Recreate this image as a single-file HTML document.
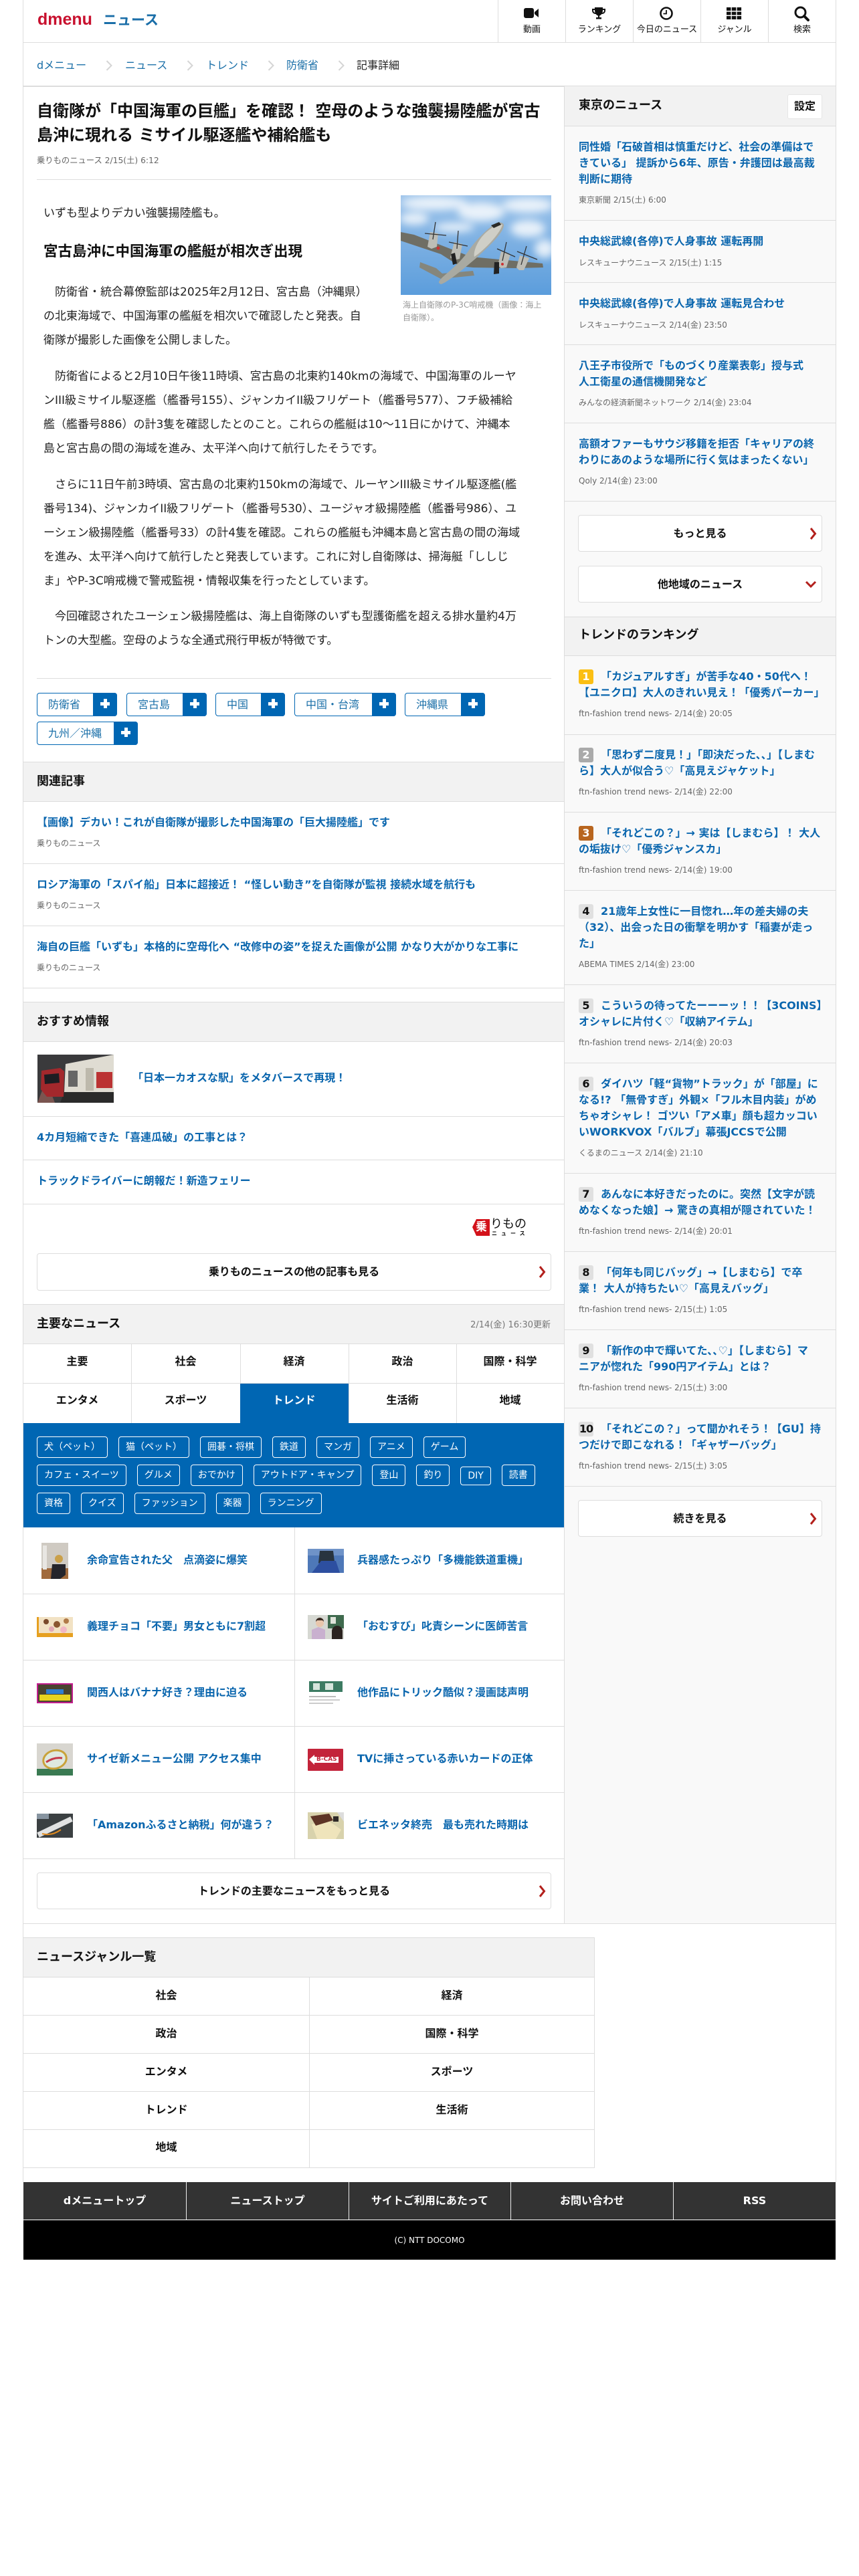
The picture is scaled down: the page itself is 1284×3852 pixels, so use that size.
<!DOCTYPE html>
<html lang="ja"><head><meta charset="utf-8"><title>dmenu ニュース</title>
<style>
html,body{margin:0;padding:0;background:#fff}
body{width:1284px;height:3852px;position:relative;overflow:hidden;font-family:"DejaVu Sans","Noto Sans CJK JP",sans-serif;color:#111;font-size:16px}
.a{position:absolute;white-space:nowrap}
.h,.v{position:absolute;background:#ddd}
.h{height:1px}.v{width:1px}
.hd{position:absolute;background:#f2f2f2;border-top:1px solid #ddd;border-bottom:1px solid #ddd;box-sizing:border-box}
.hd b,.st{font-size:18px;font-weight:700}
.t{font-size:16px;font-weight:700;line-height:24px;color:#0a66ae}
.m{font-size:12px;line-height:18px;color:#666}
.btn{position:absolute;background:#fff;border:1px solid #ddd;border-radius:4px;box-sizing:border-box;text-align:center;font-weight:700;font-size:16px;line-height:53px}
.btn svg{position:absolute;top:17px;right:7px}
.n{position:absolute;top:0;width:100px;height:63px;text-align:center;font-size:13px;line-height:18px}
.n svg{position:absolute;left:37px;top:8px}
.n span{position:absolute;left:0;right:0;top:36px}
.bc{font-size:16px;line-height:24px;color:#1a6fa8}
.art{font-size:17px;line-height:36px;color:#222}
.tag{position:absolute;height:35px;border:1px solid #0066b3;border-radius:4px;box-sizing:border-box;background:#fff;color:#1a6fa8;font-size:16px;line-height:33px;padding-left:16px}
.tag i{position:absolute;right:-1px;top:-1px;bottom:-1px;width:36px;background:#0066b3;border-radius:0 4px 4px 0}
.tag i:before{content:"";position:absolute;left:11px;top:14px;width:14px;height:5px;background:#fff}
.tag i:after{content:"";position:absolute;left:16px;top:9px;width:5px;height:14px;background:#fff}
.tab{position:absolute;width:161px;text-align:center;font-weight:700;font-size:16px;line-height:24px}
.chips{position:absolute;left:55px;display:flex;gap:16px;align-items:flex-end}
.chip{height:32px;box-sizing:border-box;border:1px solid #fff;border-radius:4px;color:#fff;font-size:14px;line-height:30px;padding:0 10px;white-space:nowrap}
.bd{display:inline-block;width:22px;height:22px;border-radius:3px;text-align:center;font-size:16px;font-weight:700;line-height:22px;margin-right:11px;background:#e0e0e0;color:#111;vertical-align:top;margin-top:1px}
.g{position:absolute;text-align:center;font-weight:700;font-size:16px;line-height:24px}
.f{position:absolute;top:3279px;text-align:center;color:#fff;font-weight:700;font-size:16px;line-height:24px}
svg{display:block}
</style></head><body>

<!-- frame -->
<div class="v" style="left:34px;top:0;height:3263px"></div>
<div class="v" style="left:1249px;top:0;height:3263px"></div>
<div class="h" style="left:34px;top:63px;width:1216px"></div>
<div class="h" style="left:34px;top:128px;width:1216px;height:2px"></div>

<!-- logo -->
<div class="a" style="left:56px;top:11px;font:700 25px/36px 'Liberation Sans',sans-serif;color:#c8102e">dmenu</div>
<div class="a" style="left:154px;top:14px;font-size:21px;line-height:32px;font-weight:700;color:#1a6ea8">ニュース</div>

<!-- nav -->
<div class="v" style="left:744px;top:0;height:63px"></div>
<div class="v" style="left:845px;top:0;height:63px"></div>
<div class="v" style="left:946px;top:0;height:63px"></div>
<div class="v" style="left:1047px;top:0;height:63px"></div>
<div class="v" style="left:1148px;top:0;height:63px"></div>
<div class="n" style="left:745px"><svg width="24" height="24" viewBox="0 0 24 24"><path fill="#111" d="M1 7a3 3 0 0 1 3-3h9a3 3 0 0 1 3 3v9a3 3 0 0 1-3 3H4a3 3 0 0 1-3-3zM17 10l6-5v13l-6-5z"/></svg><span>動画</span></div>
<div class="n" style="left:846px"><svg width="24" height="24" viewBox="0 0 24 24"><path fill="#111" d="M6 3h12v2h4v3a5 5 0 0 1-5 5h-.6A6 6 0 0 1 13 15.6V18h3v2.5H8V18h3v-2.4A6 6 0 0 1 7.600 13H7a5 5 0 0 1-5-5V5h4zM4 7v1a3 3 0 0 0 2.600 3A14 14 0 0 1 6 7zm16 0h-2a14 14 0 0 1-.6 4A3 3 0 0 0 20 8z"/></svg><span>ランキング</span></div>
<div class="n" style="left:947px"><svg width="24" height="24" viewBox="0 0 24 24"><circle cx="12" cy="12" r="8.500" fill="none" stroke="#111" stroke-width="2.600"/><path d="M12 7v5.500H7.500" fill="none" stroke="#111" stroke-width="1.800"/></svg><span>今日のニュース</span></div>
<div class="n" style="left:1048px"><svg width="24" height="24" viewBox="0 0 24 24"><path fill="#111" d="M1 3h6.500v5H1zM8.800 3h6.500v5H8.800zM16.600 3h6.500v5h-6.500zM1 9.500h6.500v5H1zM8.800 9.500h6.500v5H8.800zM16.600 9.500h6.500v5h-6.500zM1 16h6.500v5H1zM8.800 16h6.500v5H8.800zM16.600 16h6.500v5h-6.500z"/></svg><span>ジャンル</span></div>
<div class="n" style="left:1149px"><svg width="24" height="24" viewBox="0 0 24 24"><circle cx="10.500" cy="10.500" r="7.500" fill="none" stroke="#111" stroke-width="3"/><path d="M16 16l6 6" stroke="#111" stroke-width="4" stroke-linecap="round"/></svg><span>検索</span></div>

<!-- breadcrumb -->
<div class="a bc" style="left:55px;top:86px">dメニュー</div>
<div class="a bc" style="left:187px;top:86px">ニュース</div>
<div class="a bc" style="left:308px;top:86px">トレンド</div>
<div class="a bc" style="left:428px;top:86px">防衛省</div>
<div class="a bc" style="left:533px;top:86px;color:#222">記事詳細</div>
<svg class="a" style="left:158px;top:90px" width="11" height="16"><path d="M1.500 1l7 7-7 7" fill="none" stroke="#d5d5d5" stroke-width="2"/></svg>
<svg class="a" style="left:279px;top:90px" width="11" height="16"><path d="M1.500 1l7 7-7 7" fill="none" stroke="#d5d5d5" stroke-width="2"/></svg>
<svg class="a" style="left:400px;top:90px" width="11" height="16"><path d="M1.500 1l7 7-7 7" fill="none" stroke="#d5d5d5" stroke-width="2"/></svg>
<svg class="a" style="left:505px;top:90px" width="11" height="16"><path d="M1.500 1l7 7-7 7" fill="none" stroke="#d5d5d5" stroke-width="2"/></svg>

<!-- article -->
<div class="a" style="left:55px;top:148px;font-size:24px;line-height:36px;font-weight:700">自衛隊が「中国海軍の巨艦」を確認！ 空母のような強襲揚陸艦が宮古<br>島沖に現れる ミサイル駆逐艦や補給艦も</div>
<div class="a m" style="left:55px;top:231px;font-size:12.300px">乗りものニュース 2/15(土) 6:12</div>
<div class="h" style="left:55px;top:268px;width:769px"></div>

<svg class="a" style="left:599px;top:292px" width="225" height="149" viewBox="0 0 225 149">
<defs><linearGradient id="sky" x1="0" y1="0" x2="0" y2="1"><stop offset="0" stop-color="#9cc3ea"/><stop offset=".5" stop-color="#7bafe2"/><stop offset="1" stop-color="#5b9ddc"/></linearGradient><filter id="bl"><feGaussianBlur stdDeviation="6"/></filter></defs>
<rect width="225" height="149" fill="url(#sky)"/>
<g fill="#fff" opacity=".8" filter="url(#bl)"><ellipse cx="50" cy="12" rx="50" ry="10"/><ellipse cx="120" cy="25" rx="35" ry="14"/><ellipse cx="190" cy="15" rx="38" ry="11"/><ellipse cx="20" cy="35" rx="22" ry="9"/><ellipse cx="190" cy="50" rx="26" ry="13"/><ellipse cx="80" cy="48" rx="30" ry="7"/><ellipse cx="215" cy="80" rx="15" ry="14"/></g>
<path fill="#6f6e64" d="M0 55L20 59 105 92 212 102 213 108 172 109 108 108 88 106 60 88 0 68z"/>
<path fill="#85867c" d="M29 100L53 109 62 117 108 113 110 120 60 125 28 108z"/>
<path fill="#a9aaa2" d="M60 125C56 130 56 131 60 133 66 132 85 118 115 92 130 78 152 58 154 46 155 40 146 39 139 44 125 54 110 70 100 85 85 105 70 115 60 125z"/>
<path fill="#cfcfc7" d="M125 58C135 48 146 42 152 44 150 54 130 78 110 92 108 84 115 68 125 58z"/>
<path fill="#2b2b28" d="M135 45l12-5 3 4-11 5z"/>
<g fill="#bdbdb6"><path d="M44 55l12 2-2 20-8 3-6-3z"/><path d="M80 70l12 3-4 22-8 2-6-4z"/><path d="M150 84l14 4-6 20-8 1-5-4z"/><path d="M178 90l14 4-8 18-7 0-4-4z"/></g>
<g stroke="#333" stroke-width="1.300"><path d="M52 40L48 66M36 57L68 60"/><path d="M86 53L84 80M72 70L100 76"/><path d="M158 70L152 98M144 80L171 92"/><path d="M188 76L180 104M174 84L204 96"/></g>
<path fill="#222" d="M75 88l6-2 3 16-6 2zM140 100l7 0 0 17-8 1z"/>
<circle cx="56" cy="79" r="2.500" fill="#c33"/><circle cx="152" cy="103" r="2" fill="#c33"/>
</svg>
<div class="a" style="left:602px;top:447px;font-size:12px;line-height:19px;color:#999">海上自衛隊のP-3C哨戒機（画像：海上<br>自衛隊）。</div>

<div class="a art" style="left:65px;top:301px">いずも型よりデカい強襲揚陸艦も。</div>
<div class="a" style="left:65px;top:361px;font-size:21.500px;line-height:32px;font-weight:700">宮古島沖に中国海軍の艦艇が相次ぎ出現</div>
<div class="a art" style="left:65px;top:419px">　防衛省・統合幕僚監部は2025年2月12日、宮古島（沖縄県）<br>の北東海域で、中国海軍の艦艇を相次いで確認したと発表。自<br>衛隊が撮影した画像を公開しました。</div>
<div class="a art" style="left:65px;top:545px">　防衛省によると2月10日午後11時頃、宮古島の北東約140kmの海域で、中国海軍のルーヤ<br>ンIII級ミサイル駆逐艦（艦番号155）、ジャンカイII級フリゲート（艦番号577）、フチ級補給<br>艦（艦番号886）の計3隻を確認したとのこと。これらの艦艇は10～11日にかけて、沖縄本<br>島と宮古島の間の海域を進み、太平洋へ向けて航行したそうです。</div>
<div class="a art" style="left:65px;top:707px">　さらに11日午前3時頃、宮古島の北東約150kmの海域で、ルーヤンIII級ミサイル駆逐艦(艦<br>番号134)、ジャンカイII級フリゲート（艦番号530）、ユージャオ級揚陸艦（艦番号986）、ユ<br>ーシェン級揚陸艦（艦番号33）の計4隻を確認。これらの艦艇も沖縄本島と宮古島の間の海域<br>を進み、太平洋へ向けて航行したと発表しています。これに対し自衛隊は、掃海艇「ししじ<br>ま」やP-3C哨戒機で警戒監視・情報収集を行ったとしています。</div>
<div class="a art" style="left:65px;top:904px">　今回確認されたユーシェン級揚陸艦は、海上自衛隊のいずも型護衛艦を超える排水量約4万<br>トンの大型艦。空母のような全通式飛行甲板が特徴です。</div>
<div class="h" style="left:55px;top:1014px;width:769px"></div>

<!-- tags -->
<div class="tag" style="left:55px;top:1036px;width:120px">防衛省<i></i></div>
<div class="tag" style="left:189px;top:1036px;width:120px">宮古島<i></i></div>
<div class="tag" style="left:322px;top:1036px;width:104px">中国<i></i></div>
<div class="tag" style="left:440px;top:1036px;width:152px">中国・台湾<i></i></div>
<div class="tag" style="left:605px;top:1036px;width:120px">沖縄県<i></i></div>
<div class="tag" style="left:55px;top:1079px;width:151px">九州／沖縄<i></i></div>

<!-- related -->
<div class="hd" style="left:35px;top:1139px;width:808px;height:60px"><b class="a" style="left:20px;top:15px;line-height:27px">関連記事</b></div>
<div class="a t" style="left:55px;top:1218px">【画像】デカい！これが自衛隊が撮影した中国海軍の「巨大揚陸艦」です</div>
<div class="a m" style="left:55px;top:1252px">乗りものニュース</div>
<div class="h" style="left:35px;top:1291px;width:808px"></div>
<div class="a t" style="left:55px;top:1311px">ロシア海軍の「スパイ船」日本に超接近！ “怪しい動き”を自衛隊が監視 接続水域を航行も</div>
<div class="a m" style="left:55px;top:1345px">乗りものニュース</div>
<div class="h" style="left:35px;top:1384px;width:808px"></div>
<div class="a t" style="left:55px;top:1404px">海自の巨艦「いずも」本格的に空母化へ “改修中の姿”を捉えた画像が公開 かなり大がかりな工事に</div>
<div class="a m" style="left:55px;top:1438px">乗りものニュース</div>
<div class="h" style="left:35px;top:1477px;width:808px"></div>

<!-- recommend -->
<div class="hd" style="left:35px;top:1498px;width:808px;height:60px"><b class="a" style="left:20px;top:15px;line-height:27px">おすすめ情報</b></div>
<svg class="a" style="left:56px;top:1577px" width="114" height="72" viewBox="0 0 114 72"><rect width="114" height="72" fill="#3a3a3c"/><path fill="#dfdcd2" d="M42 14L114 0v56H40z"/><path fill="#bdb9ac" d="M72 20h12v34H72z"/><path fill="#2a2a2a" d="M40 56h74v16H34z"/><path fill="#7a5550" d="M0 72L10 46h6L26 72z"/><path fill="#a3282c" d="M6 24l28-4 6 5-1 38H14L5 52z"/><path fill="#1d1d22" d="M10 30l22-2 1 14-22 2z"/><path fill="#b33" d="M88 26h24v24H88z"/><path fill="#666" d="M46 24h14v24H46z"/></svg>
<div class="a t" style="left:198px;top:1600px">「日本一カオスな駅」をメタバースで再現！</div>
<div class="h" style="left:35px;top:1669px;width:808px"></div>
<div class="a t" style="left:55px;top:1689px">4カ月短縮できた「喜連瓜破」の工事とは？</div>
<div class="h" style="left:35px;top:1734px;width:808px"></div>
<div class="a t" style="left:55px;top:1754px">トラックドライバーに朗報だ！新造フェリー</div>
<div class="h" style="left:35px;top:1800px;width:808px"></div>
<svg class="a" style="left:706px;top:1822px" width="28" height="27"><path fill="#d3121a" d="M6 1h20v25H6L0 13z"/></svg>
<div class="a" style="left:711px;top:1823px;font-size:17px;line-height:24px;color:#fff;font-weight:700">乗</div>
<div class="a" style="left:733px;top:1820px;font-size:18px;line-height:22px;color:#111">りもの</div>
<div class="a" style="left:735px;top:1840px;font-size:8px;line-height:10px;color:#111;font-weight:700;letter-spacing:6px">ニュース</div>
<div class="btn" style="left:55px;top:1874px;width:769px;height:56px">乗りものニュースの他の記事も見る<svg width="11" height="20"><path d="M2 2l6.500 8L2 18" fill="none" stroke="#b3201c" stroke-width="3"/></svg></div>

<!-- main news -->
<div class="hd" style="left:35px;top:1950px;width:808px;height:60px"><b class="a" style="left:20px;top:15px;line-height:27px">主要なニュース</b><span class="a" style="right:20px;top:21px;font-size:13px;line-height:20px;color:#777">2/14(金) 16:30更新</span></div>
<div class="tab" style="left:35px;top:2024px">主要</div>
<div class="tab" style="left:197px;top:2024px">社会</div>
<div class="tab" style="left:359px;top:2024px">経済</div>
<div class="tab" style="left:521px;top:2024px">政治</div>
<div class="tab" style="left:682px;top:2024px">国際・科学</div>
<div class="tab" style="left:35px;top:2082px">エンタメ</div>
<div class="tab" style="left:197px;top:2082px">スポーツ</div>
<div class="a" style="left:359px;top:2068px;width:162px;height:60px;background:#0066b3"></div>
<div class="tab" style="left:359px;top:2082px;color:#fff">トレンド</div>
<div class="tab" style="left:521px;top:2082px">生活術</div>
<div class="tab" style="left:682px;top:2082px">地域</div>
<div class="h" style="left:35px;top:2068px;width:808px"></div>
<div class="v" style="left:196px;top:2010px;height:118px"></div>
<div class="v" style="left:359px;top:2010px;height:58px"></div>
<div class="v" style="left:521px;top:2010px;height:118px"></div>
<div class="v" style="left:682px;top:2010px;height:118px"></div>
<div class="a" style="left:35px;top:2128px;width:808px;height:156px;background:#0066b3"></div>
<div class="chips" style="top:2148px"><span class="chip">犬（ペット）</span><span class="chip">猫（ペット）</span><span class="chip">囲碁・将棋</span><span class="chip">鉄道</span><span class="chip">マンガ</span><span class="chip">アニメ</span><span class="chip">ゲーム</span></div>
<div class="chips" style="top:2190px"><span class="chip">カフェ・スイーツ</span><span class="chip">グルメ</span><span class="chip">おでかけ</span><span class="chip">アウトドア・キャンプ</span><span class="chip">登山</span><span class="chip">釣り</span><span class="chip" style="height:28px;line-height:26px;margin-bottom:1px">DIY</span><span class="chip">読書</span></div>
<div class="chips" style="top:2232px"><span class="chip">資格</span><span class="chip">クイズ</span><span class="chip">ファッション</span><span class="chip">楽器</span><span class="chip">ランニング</span></div>

<!-- grid -->
<div class="v" style="left:440px;top:2284px;height:495px"></div>
<div class="h" style="left:35px;top:2383px;width:808px"></div>
<div class="h" style="left:35px;top:2482px;width:808px"></div>
<div class="h" style="left:35px;top:2581px;width:808px"></div>
<div class="h" style="left:35px;top:2680px;width:808px"></div>
<div class="h" style="left:35px;top:2779px;width:808px"></div>

<svg class="a" style="left:62px;top:2307px" width="40" height="54" viewBox="0 0 40 54"><rect width="40" height="54" fill="#cfcac2"/><rect y="38" width="40" height="16" fill="#a06a3c"/><rect x="2" y="4" width="6" height="36" fill="#e8e6e2"/><circle cx="26" cy="24" r="6" fill="#caa04a"/><path fill="#25252b" d="M16 32h20v16l-8 6H14z"/></svg>
<div class="a t" style="left:130px;top:2321px">余命宣告された父　点滴姿に爆笑</div>
<svg class="a" style="left:460px;top:2316px" width="54" height="36" viewBox="0 0 54 36"><rect width="54" height="36" fill="#4e78b8"/><rect width="54" height="10" fill="#6f93c8"/><path fill="#28343f" d="M18 3h20l2 16-5 10H24l-8-8z"/><path fill="#2d4fa0" d="M20 18h22l6 18H6z"/></svg>
<div class="a t" style="left:534px;top:2321px">兵器感たっぷり「多機能鉄道重機」</div>

<svg class="a" style="left:55px;top:2418px" width="54" height="30" viewBox="0 0 54 30"><rect width="54" height="30" fill="#f2e2c4"/><circle cx="14" cy="7" r="4" fill="#7a4a2a"/><circle cx="30" cy="11" r="5" fill="#8a5630"/><circle cx="44" cy="6" r="4" fill="#b07a48"/><circle cx="22" cy="18" r="4" fill="#e3a9b5"/><circle cx="40" cy="19" r="5" fill="#f1b7c4"/><rect y="24" width="54" height="6" fill="#e6a020"/><rect width="3" height="30" fill="#e6a020"/></svg>
<div class="a t" style="left:130px;top:2420px">義理チョコ「不要」男女ともに7割超</div>
<svg class="a" style="left:460px;top:2415px" width="54" height="36" viewBox="0 0 54 36"><rect width="54" height="36" fill="#d6d8d2"/><rect x="30" width="24" height="20" fill="#3f6a4e"/><rect x="34" y="3" width="8" height="10" fill="#dfe3da"/><path fill="#c9b0cf" d="M6 36V22l10-4 10 4v14z"/><circle cx="18" cy="12" r="6" fill="#e8c6ac"/><path fill="#3a2a22" d="M12 10a6 6 0 0 1 12 0l-2-2h-8z"/><path fill="#2b2320" d="M36 36V24a8 8 0 0 1 16 0v12z"/></svg>
<div class="a t" style="left:534px;top:2420px">「おむすび」叱責シーンに医師苦言</div>

<svg class="a" style="left:55px;top:2517px" width="54" height="30" viewBox="0 0 54 30"><rect width="54" height="30" fill="#c21d8d"/><rect x="2" y="2" width="50" height="26" fill="#4a4330"/><rect x="14" y="9" width="26" height="7" fill="#2f7ed0"/><rect x="4" y="17" width="46" height="9" fill="#e7d31f"/></svg>
<div class="a t" style="left:130px;top:2519px">関西人はバナナ好き？理由に迫る</div>
<svg class="a" style="left:460px;top:2510px" width="54" height="45" viewBox="0 0 54 45"><rect width="54" height="45" fill="#fff"/><rect x="2" y="4" width="50" height="16" fill="#3c7b62"/><rect x="8" y="7" width="10" height="10" fill="#d6e5dc"/><rect x="26" y="7" width="12" height="10" fill="#d6e5dc"/><rect x="2" y="26" width="40" height="2" fill="#bbb"/><rect x="2" y="31" width="46" height="2" fill="#ccc"/><rect x="2" y="36" width="36" height="2" fill="#ccc"/></svg>
<div class="a t" style="left:534px;top:2519px">他作品にトリック酷似？漫画誌声明</div>

<svg class="a" style="left:55px;top:2607px" width="54" height="48" viewBox="0 0 54 48"><rect width="54" height="48" fill="#d8d6d0"/><rect y="38" width="54" height="10" fill="#3a7a52"/><ellipse cx="27" cy="24" rx="19" ry="15" transform="rotate(-15 27 24)" fill="#c9a23a"/><ellipse cx="27" cy="24" rx="16" ry="12" transform="rotate(-15 27 24)" fill="#dfe9e0"/><path d="M14 28q12-8 24-6" stroke="#c43a4a" stroke-width="3" fill="none"/></svg>
<div class="a t" style="left:130px;top:2618px">サイゼ新メニュー公開 アクセス集中</div>
<svg class="a" style="left:460px;top:2615px" width="53" height="33" viewBox="0 0 53 33"><rect width="53" height="33" rx="1" fill="#c3243a"/><path fill="#fff" d="M2 16L10 9v3h36v9H10v3z"/></svg>
<div class="a" style="left:473px;top:2622px;font-size:9px;line-height:18px;color:#c3243a;font-weight:700">B-CAS</div>
<div class="a t" style="left:534px;top:2618px">TVに挿さっている赤いカードの正体</div>

<svg class="a" style="left:55px;top:2712px" width="54" height="36" viewBox="0 0 54 36"><rect width="54" height="36" fill="#3b4042"/><rect y="0" width="18" height="8" fill="#8794a0"/><path d="M2 32L52 8" stroke="#fff" stroke-width="8" opacity=".85"/><path d="M8 30q14 4 28-6" stroke="#e08a1e" stroke-width="2" fill="none"/></svg>
<div class="a t" style="left:130px;top:2717px">「Amazonふるさと納税」何が違う？</div>
<svg class="a" style="left:460px;top:2710px" width="54" height="40" viewBox="0 0 54 40"><rect width="54" height="40" fill="#d8d2ac"/><path fill="#efe4bb" d="M6 18L30 12 50 26 42 40H14z"/><path fill="#5d3426" d="M4 6L32 2 38 12 12 20z"/><path fill="#ddd" d="M44 0h10v14z"/><rect x="38" y="6" width="8" height="8" fill="#2f2a28"/></svg>
<div class="a t" style="left:534px;top:2717px">ビエネッタ終売　最も売れた時期は</div>

<div class="btn" style="left:55px;top:2800px;width:769px;height:55px">トレンドの主要なニュースをもっと見る<svg width="11" height="20"><path d="M2 2l6.500 8L2 18" fill="none" stroke="#b3201c" stroke-width="3"/></svg></div>

<!-- sidebar -->
<div class="a" style="left:843px;top:130px;width:406px;height:2746px;background:#f9f9f9"></div>
<div class="v" style="left:843px;top:130px;height:2746px"></div>
<div class="hd" style="left:844px;top:129px;width:405px;height:60px;border-top:0"></div>
<div class="a st" style="left:865px;top:144px;line-height:27px">東京のニュース</div>
<div class="a" style="left:1177px;top:141px;width:52px;height:37px;box-sizing:border-box;background:#fff;border:1px solid #e6e6e6;border-radius:3px;text-align:center;font-weight:700;font-size:16px;line-height:33px">設定</div>

<div class="a t" style="left:865px;top:208px">同性婚「石破首相は慎重だけど、社会の準備はで<br>きている」 提訴から6年、原告・弁護団は最高裁<br>判断に期待</div>
<div class="a m" style="left:865px;top:290px">東京新聞 2/15(土) 6:00</div>
<div class="h" style="left:844px;top:329px;width:405px"></div>
<div class="a t" style="left:865px;top:349px">中央総武線(各停)で人身事故 運転再開</div>
<div class="a m" style="left:865px;top:384px">レスキューナウニュース 2/15(土) 1:15</div>
<div class="h" style="left:844px;top:422px;width:405px"></div>
<div class="a t" style="left:865px;top:442px">中央総武線(各停)で人身事故 運転見合わせ</div>
<div class="a m" style="left:865px;top:477px">レスキューナウニュース 2/14(金) 23:50</div>
<div class="h" style="left:844px;top:515px;width:405px"></div>
<div class="a t" style="left:865px;top:535px">八王子市役所で「ものづくり産業表彰」授与式<br>人工衛星の通信機開発など</div>
<div class="a m" style="left:865px;top:593px">みんなの経済新聞ネットワーク 2/14(金) 23:04</div>
<div class="h" style="left:844px;top:632px;width:405px"></div>
<div class="a t" style="left:865px;top:652px">高額オファーもサウジ移籍を拒否「キャリアの終<br>わりにあのような場所に行く気はまったくない」</div>
<div class="a m" style="left:865px;top:710px">Qoly 2/14(金) 23:00</div>
<div class="h" style="left:844px;top:749px;width:405px"></div>
<div class="btn" style="left:864px;top:770px;width:365px;height:55px">もっと見る<svg width="11" height="20"><path d="M2 2l6.500 8L2 18" fill="none" stroke="#b3201c" stroke-width="3"/></svg></div>
<div class="btn" style="left:864px;top:846px;width:365px;height:55px">他地域のニュース<svg style="top:21px" width="18" height="12"><path d="M2 2l7 7 7-7" fill="none" stroke="#b3201c" stroke-width="3"/></svg></div>
<div class="hd" style="left:844px;top:922px;width:405px;height:59px"></div>
<div class="a st" style="left:865px;top:936px;line-height:27px">トレンドのランキング</div>

<div class="a t" style="left:865px;top:1000px"><span class="bd" style="background:#fbbf14;color:#fff">1</span>「カジュアルすぎ」が苦手な40・50代へ！<br>【ユニクロ】大人のきれい見え！「優秀パーカー」</div>
<div class="a m" style="left:865px;top:1058px">ftn-fashion trend news- 2/14(金) 20:05</div>
<div class="h" style="left:844px;top:1098px;width:405px"></div>
<div class="a t" style="left:865px;top:1117px"><span class="bd" style="background:#aaa;color:#fff">2</span>「思わず二度見！」「即決だった､､」【しまむ<br>ら】大人が似合う♡「高見えジャケット」</div>
<div class="a m" style="left:865px;top:1175px">ftn-fashion trend news- 2/14(金) 22:00</div>
<div class="h" style="left:844px;top:1214px;width:405px"></div>
<div class="a t" style="left:865px;top:1234px"><span class="bd" style="background:#b8651e;color:#fff">3</span>「それどこの？」→ 実は【しまむら】！ 大人<br>の垢抜け♡「優秀ジャンスカ」</div>
<div class="a m" style="left:865px;top:1292px">ftn-fashion trend news- 2/14(金) 19:00</div>
<div class="h" style="left:844px;top:1331px;width:405px"></div>
<div class="a t" style="left:865px;top:1351px"><span class="bd">4</span>21歳年上女性に一目惚れ…年の差夫婦の夫<br>（32）、出会った日の衝撃を明かす「稲妻が走っ<br>た」</div>
<div class="a m" style="left:865px;top:1433px">ABEMA TIMES 2/14(金) 23:00</div>
<div class="h" style="left:844px;top:1472px;width:405px"></div>
<div class="a t" style="left:865px;top:1492px"><span class="bd">5</span>こういうの待ってたーーーッ！！【3COINS】<br>オシャレに片付く♡「収納アイテム」</div>
<div class="a m" style="left:865px;top:1550px">ftn-fashion trend news- 2/14(金) 20:03</div>
<div class="h" style="left:844px;top:1589px;width:405px"></div>
<div class="a t" style="left:865px;top:1609px"><span class="bd">6</span>ダイハツ「軽“貨物”トラック」が「部屋」に<br>なる!? 「無骨すぎ」外観×「フル木目内装」がめ<br>ちゃオシャレ！ ゴツい「アメ車」顔も超カッコい<br>いWORKVOX「バルブ」幕張JCCSで公開</div>
<div class="a m" style="left:865px;top:1715px">くるまのニュース 2/14(金) 21:10</div>
<div class="h" style="left:844px;top:1754px;width:405px"></div>
<div class="a t" style="left:865px;top:1774px"><span class="bd">7</span>あんなに本好きだったのに。突然【文字が読<br>めなくなった娘】→ 驚きの真相が隠されていた！</div>
<div class="a m" style="left:865px;top:1832px">ftn-fashion trend news- 2/14(金) 20:01</div>
<div class="h" style="left:844px;top:1871px;width:405px"></div>
<div class="a t" style="left:865px;top:1891px"><span class="bd">8</span>「何年も同じバッグ」→【しまむら】で卒<br>業！ 大人が持ちたい♡「高見えバッグ」</div>
<div class="a m" style="left:865px;top:1949px">ftn-fashion trend news- 2/15(土) 1:05</div>
<div class="h" style="left:844px;top:1988px;width:405px"></div>
<div class="a t" style="left:865px;top:2008px"><span class="bd">9</span>「新作の中で輝いてた､､♡」【しまむら】マ<br>ニアが惚れた「990円アイテム」とは？</div>
<div class="a m" style="left:865px;top:2066px">ftn-fashion trend news- 2/15(土) 3:00</div>
<div class="h" style="left:844px;top:2105px;width:405px"></div>
<div class="a t" style="left:865px;top:2125px"><span class="bd" style="letter-spacing:-1px">10</span>「それどこの？」って聞かれそう！【GU】持<br>つだけで即こなれる！「ギャザーバッグ」</div>
<div class="a m" style="left:865px;top:2183px">ftn-fashion trend news- 2/15(土) 3:05</div>
<div class="h" style="left:844px;top:2222px;width:405px"></div>
<div class="btn" style="left:864px;top:2243px;width:365px;height:55px">続きを見る<svg width="11" height="20"><path d="M2 2l6.500 8L2 18" fill="none" stroke="#b3201c" stroke-width="3"/></svg></div>

<div class="h" style="left:34px;top:2876px;width:1216px"></div>

<!-- genre list -->
<div class="hd" style="left:35px;top:2897px;width:854px;height:60px;border-right:1px solid #ddd"><b class="a" style="left:20px;top:15px;line-height:27px">ニュースジャンル一覧</b></div>
<div class="g" style="left:35px;width:427px;top:2972px">社会</div><div class="g" style="left:462px;width:427px;top:2972px">経済</div>
<div class="g" style="left:35px;width:427px;top:3029px">政治</div><div class="g" style="left:462px;width:427px;top:3029px">国際・科学</div>
<div class="g" style="left:35px;width:427px;top:3086px">エンタメ</div><div class="g" style="left:462px;width:427px;top:3086px">スポーツ</div>
<div class="g" style="left:35px;width:427px;top:3143px">トレンド</div><div class="g" style="left:462px;width:427px;top:3143px">生活術</div>
<div class="g" style="left:35px;width:427px;top:3199px">地域</div>
<div class="h" style="left:35px;top:3013px;width:854px"></div>
<div class="h" style="left:35px;top:3070px;width:854px"></div>
<div class="h" style="left:35px;top:3127px;width:854px"></div>
<div class="h" style="left:35px;top:3184px;width:854px"></div>
<div class="h" style="left:35px;top:3241px;width:854px"></div>
<div class="v" style="left:462px;top:2957px;height:284px"></div>
<div class="v" style="left:888px;top:2957px;height:284px"></div>

<!-- footer -->
<div class="a" style="left:35px;top:3263px;width:1214px;height:56px;background:#333"></div>
<div class="v" style="left:278px;top:3263px;height:56px;background:#eee"></div>
<div class="v" style="left:521px;top:3263px;height:56px;background:#eee"></div>
<div class="v" style="left:763px;top:3263px;height:56px;background:#eee"></div>
<div class="v" style="left:1006px;top:3263px;height:56px;background:#eee"></div>
<div class="f" style="left:35px;width:243px">dメニュートップ</div>
<div class="f" style="left:279px;width:242px">ニューストップ</div>
<div class="f" style="left:522px;width:241px">サイトご利用にあたって</div>
<div class="f" style="left:764px;width:242px">お問い合わせ</div>
<div class="f" style="left:1007px;width:242px">RSS</div>
<div class="a" style="left:35px;top:3320px;width:1214px;height:59px;background:#000;color:#fff;text-align:center;font-size:12px;line-height:61px">(C) NTT DOCOMO</div>
</body></html>
